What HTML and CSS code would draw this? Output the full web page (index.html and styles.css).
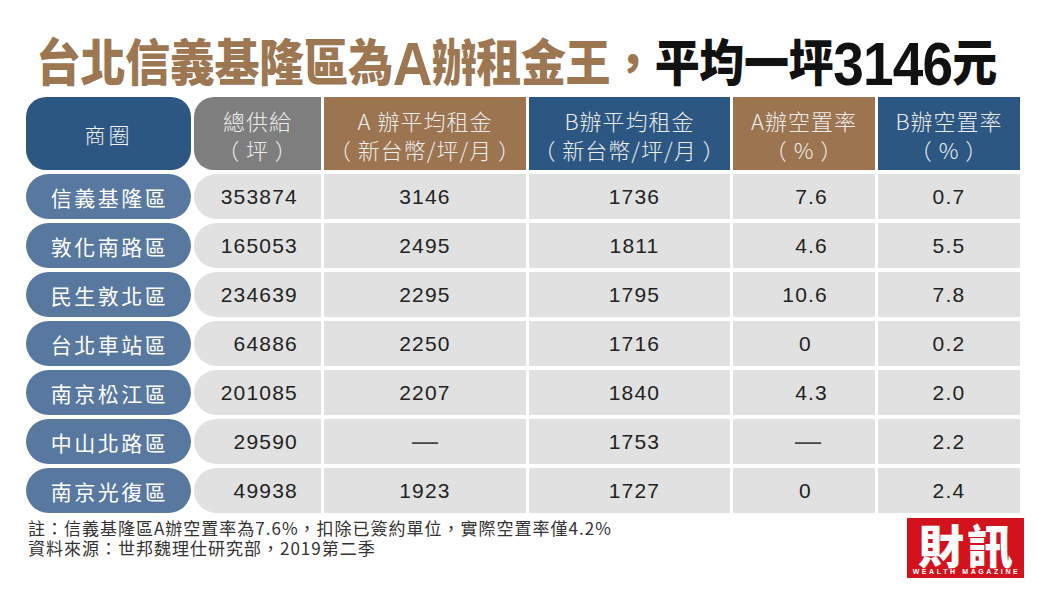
FILE: index.html
```html
<!DOCTYPE html>
<html lang="zh-Hant">
<head>
<meta charset="utf-8">
<title>台北信義基隆區為A辦租金王</title>
<link rel="stylesheet" href="styles.css">
</head>
<body>
<div class="page">
  <h1 class="title"><span class="brown">台北信義基隆區為<span class="lat">A</span>辦租金王，</span><span class="black">平均一坪<span class="lat">3146</span>元</span></h1>

  <div class="table">
    <div class="hd hd-label">商圈</div>
    <div class="hd hd-gray">總供給<br>（ 坪 ）</div>
    <div class="hd hd-brown">A 辦平均租金<br>（ 新台幣/坪/月 ）</div>
    <div class="hd hd-navy">B辦平均租金<br>（ 新台幣/坪/月 ）</div>
    <div class="hd hd-brown">A辦空置率<br>（ % ）</div>
    <div class="hd hd-navy">B辦空置率<br>（ % ）</div>

    <div class="lbl">信義基隆區</div>
    <div class="c supply">353874</div>
    <div class="c">3146</div>
    <div class="c brent">1736</div>
    <div class="c avac">7.6</div>
    <div class="c">0.7</div>

    <div class="lbl">敦化南路區</div>
    <div class="c supply">165053</div>
    <div class="c">2495</div>
    <div class="c brent">1811</div>
    <div class="c avac">4.6</div>
    <div class="c">5.5</div>

    <div class="lbl">民生敦北區</div>
    <div class="c supply">234639</div>
    <div class="c">2295</div>
    <div class="c brent">1795</div>
    <div class="c avac">10.6</div>
    <div class="c">7.8</div>

    <div class="lbl">台北車站區</div>
    <div class="c supply">64886</div>
    <div class="c">2250</div>
    <div class="c brent">1716</div>
    <div class="c avac int">0</div>
    <div class="c">0.2</div>

    <div class="lbl">南京松江區</div>
    <div class="c supply">201085</div>
    <div class="c">2207</div>
    <div class="c brent">1840</div>
    <div class="c avac">4.3</div>
    <div class="c">2.0</div>

    <div class="lbl">中山北路區</div>
    <div class="c supply">29590</div>
    <div class="c"><span class="dash">—</span></div>
    <div class="c brent">1753</div>
    <div class="c avac none"><span class="dash">—</span></div>
    <div class="c">2.2</div>

    <div class="lbl">南京光復區</div>
    <div class="c supply">49938</div>
    <div class="c">1923</div>
    <div class="c brent">1727</div>
    <div class="c avac int">0</div>
    <div class="c">2.4</div>
  </div>

  <div class="footer">
    <div class="notes">
      <p>註：信義基隆區A辦空置率為7.6%，扣除已簽約單位，實際空置率僅4.2%</p>
      <p>資料來源：世邦魏理仕研究部，2019第二季</p>
    </div>
    <div class="logo">
      <div class="logo-cn">財訊</div>
      <div class="logo-en">WEALTH MAGAZINE</div>
    </div>
  </div>
</div>
</body>
</html>
```

FILE: styles.css
```css
html, body {
  margin: 0;
  padding: 0;
  background: #ffffff;
}

body {
  font-family: "Noto Sans CJK TC", "Noto Sans", sans-serif;
  text-spacing-trim: space-all;
  font-feature-settings: "chws" 0, "halt" 0;
}

.page {
  width: 1048px;
  height: 596px;
  box-sizing: border-box;
  padding: 34px 0 0 26px;
  overflow: hidden;
}

/* ---------- title ---------- */
.title {
  margin: 0 0 11px 10px;
  font-family: "Noto Sans CJK TC", sans-serif;
  font-size: 45px;
  line-height: 52px;
  height: 52px;
  font-weight: 900;
  letter-spacing: -0.4px;
  white-space: nowrap;
  transform: scaleY(1.1);
  transform-origin: 50% 50%;
}

.title .lat {
  font-family: "Liberation Sans", Arial, sans-serif;
  font-weight: 700;
  font-size: 55px;
  line-height: 40px;
  vertical-align: -4px;
  letter-spacing: -0.8px;
}

.brown {
  color: #9d7652;
}

.black {
  color: #111111;
}

/* ---------- table ---------- */
.table {
  display: grid;
  grid-template-columns: 165px 127px 202px 201px 142px 142px;
  grid-template-rows: 73px repeat(7, 45px);
  column-gap: 3px;
  row-gap: 4px;
}

.hd {
  display: flex;
  align-items: center;
  justify-content: center;
  text-align: center;
  color: #ececec;
  font-size: 22px;
  line-height: 29px;
  font-weight: 300;
  letter-spacing: 1px;
  padding-top: 2px;
  box-sizing: border-box;
  white-space: pre;
}

.hd-label {
  background: #2c5782;
  border-radius: 20px;
  color: #f2f2f2;
  font-size: 21px;
  letter-spacing: 3px;
}

.hd-gray {
  background: #7e7e7e;
  border-radius: 20px 0 0 20px;
}

.hd-brown {
  background: #9c7450;
}

.hd-navy {
  background: #2c5782;
}

.lbl {
  display: flex;
  align-items: center;
  justify-content: center;
  background: #5878a0;
  border-radius: 23px;
  color: #ffffff;
  font-size: 21px;
  letter-spacing: 2.5px;
  font-weight: 400;
  padding-left: 2px;
}

.c {
  display: flex;
  align-items: center;
  justify-content: center;
  background: #e1e1e1;
  color: #222222;
  font-family: "Liberation Sans", Arial, sans-serif;
  font-size: 21px;
  letter-spacing: 1.2px;
}

.c.supply {
  border-radius: 23px 0 0 23px;
  justify-content: flex-end;
  padding-right: 23px;
}

.c.brent {
  padding-left: 10px;
}

.c.avac {
  justify-content: flex-end;
  padding-right: 47px;
}

.c.avac.int {
  padding-right: 63px;
}

.c.avac.none {
  padding-right: 54px;
}

.dash {
  font-size: 26px;
  font-weight: 300;
  color: #444444;
  letter-spacing: 0;
}

/* ---------- footer ---------- */
.footer {
  display: flex;
  justify-content: space-between;
  align-items: flex-start;
  width: 998px;
  margin-top: 5px;
}

.notes {
  font-size: 17px;
  line-height: 20px;
  color: #333333;
  letter-spacing: 1px;
  padding-left: 2px;
}

.notes p {
  margin: 0;
}

.logo {
  width: 117px;
  height: 60px;
  background: #d2131d;
  color: #ffffff;
  display: flex;
  flex-direction: column;
  align-items: center;
}

.logo-cn {
  font-family: "Noto Sans CJK TC", sans-serif;
  font-weight: 900;
  font-size: 46px;
  line-height: 46px;
  letter-spacing: 3px;
  margin-top: 2px;
  padding-left: 3px;
}

.logo-en {
  font-family: "Liberation Sans", Arial, sans-serif;
  font-weight: 700;
  font-size: 7px;
  line-height: 8px;
  letter-spacing: 2.6px;
  margin-top: 2px;
  padding-left: 2px;
}
```
